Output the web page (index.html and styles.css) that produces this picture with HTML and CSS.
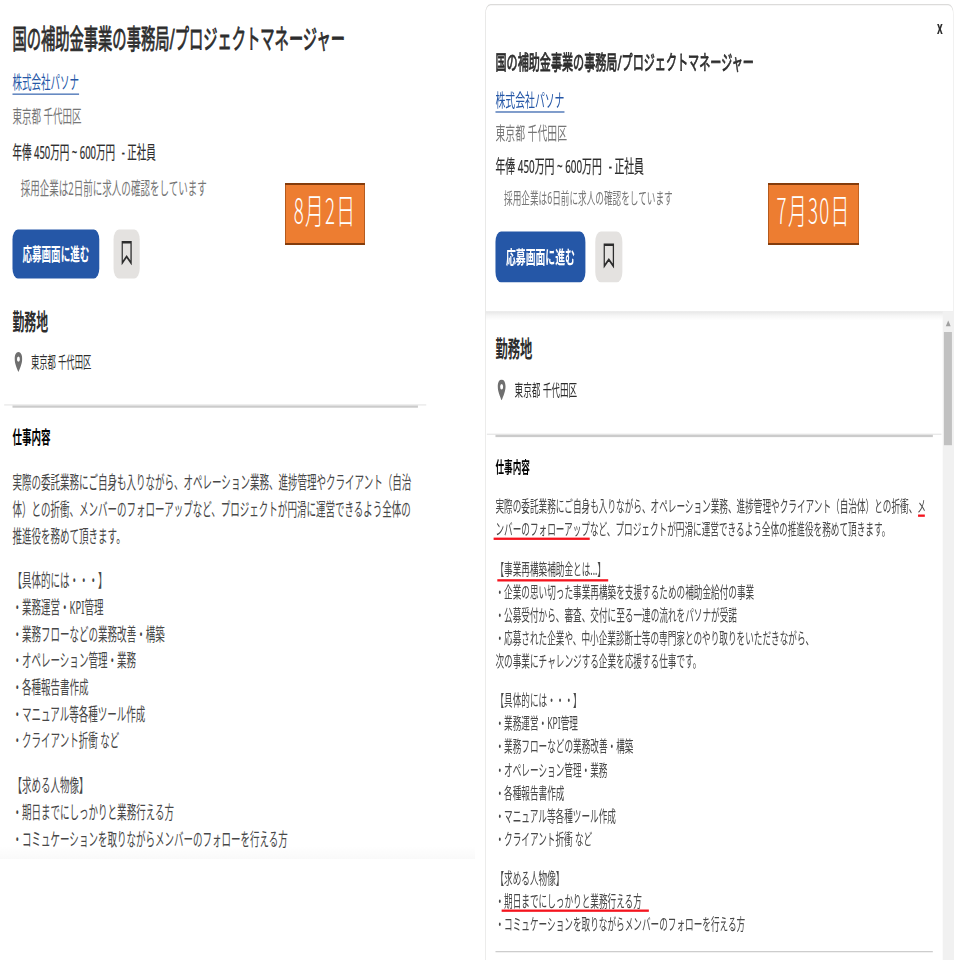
FILE: index.html
```
<!DOCTYPE html>
<html lang="ja">
<head>
    <meta charset="UTF-8">
    <meta name="viewport" content="width=device-width, initial-scale=1.0">
    <title>国の補助金事業の事務局/プロジェクトマネージャー</title>
    <link rel="stylesheet" href="styles.css">
</head>
<body>
    <!-- Posting on August 2 -->
    <section class="pane pane-left">
        <div class="sheet">
            <h1>国の補助金事業の事務局/プロジェクトマネージャー</h1>
            <div class="company"><a href="#">株式会社パソナ</a></div>
            <div class="location">東京都 千代田区</div>
            <div class="salary">年俸 450万円 ~ 600万円 <span class="job-type">- 正社員</span></div>
            <div class="note">採用企業は2日前に求人の確認をしています</div>
            <div class="actions">
                <button class="apply">応募画面に進む</button>
                <button class="save" aria-label="保存">
                    <svg width="18" height="22" viewBox="0 0 18 22"><path d="M1.5 1.5H16.5V20L9 14.2L1.5 20Z"/></svg>
                </button>
            </div>
            <h2>勤務地</h2>
            <div class="place">
                <svg width="14" height="18" viewBox="0 0 14 18"><path fill-rule="evenodd" d="M7 0C3.1 0 .6 2.8.6 6.3C.6 10.8 7 18 7 18S13.4 10.8 13.4 6.3C13.4 2.8 10.9 0 7 0ZM7 4A2.4 2.4 0 1 1 7 8.8A2.4 2.4 0 1 1 7 4Z"/></svg>
                <span>東京都 千代田区</span>
            </div>
            <div class="divider"></div>
            <h3>仕事内容</h3>
            <div class="description">
                <p>実際の委託業務にご自身も入りながら、オペレーション業務、進捗管理やクライアント（自治<br>体）との折衝、メンバーのフォローアップなど、プロジェクトが円滑に運営できるよう全体の<br>推進役を務めて頂きます。</p>
                <p>【具体的には・・・】<br>・業務運営・KPI管理<br>・業務フローなどの業務改善・構築<br>・オペレーション管理・業務<br>・各種報告書作成<br>・マニュアル等各種ツール作成<br>・クライアント折衝 など</p>
                <p>【求める人物像】<br>・期日までにしっかりと業務行える方<br>・コミュケーションを取りながらメンバーのフォローを行える方</p>
            </div>
        </div>
        <div class="fade"></div>
        <div class="date-label">8月2日</div>
    </section>

    <!-- Posting on July 30 -->
    <section class="pane pane-right">
        <div class="sheet">
            <div class="sheet-head">
                <span class="close">x</span>
                <h1>国の補助金事業の事務局/プロジェクトマネージャー</h1>
                <div class="company"><a href="#">株式会社パソナ</a></div>
                <div class="location">東京都 千代田区</div>
                <div class="salary">年俸 450万円 ~ 600万円 <span class="job-type">- 正社員</span></div>
                <div class="note">採用企業は6日前に求人の確認をしています</div>
                <div class="actions">
                    <button class="apply">応募画面に進む</button>
                    <button class="save" aria-label="保存">
                        <svg width="18" height="22" viewBox="0 0 18 22"><path d="M1.5 1.5H16.5V20L9 14.2L1.5 20Z"/></svg>
                    </button>
                </div>
            </div>
            <div class="sheet-body">
                <div class="content">
                    <h2>勤務地</h2>
                    <div class="place">
                        <svg width="14" height="18" viewBox="0 0 14 18"><path fill-rule="evenodd" d="M7 0C3.1 0 .6 2.8.6 6.3C.6 10.8 7 18 7 18S13.4 10.8 13.4 6.3C13.4 2.8 10.9 0 7 0ZM7 4A2.4 2.4 0 1 1 7 8.8A2.4 2.4 0 1 1 7 4Z"/></svg>
                        <span>東京都 千代田区</span>
                    </div>
                    <div class="divider"></div>
                    <h3>仕事内容</h3>
                    <div class="description">
                        <p>実際の委託業務にご自身も入りながら、オペレーション業務、進捗管理やクライアント（自治体）との折衝、<span class="mark mark-me">メ</span><br><span class="mark mark-follow">ンバーのフォローアップ</span>など、プロジェクトが円滑に運営できるよう全体の推進役を務めて頂きます。</p>
                        <p><span class="mark mark-subsidy">【事業再構築補助金とは...】</span><br>・企業の思い切った事業再構築を支援するための補助金給付の事業<br>・公募受付から、審査、交付に至る一連の流れをパソナが受諾<br>・応募された企業や、中小企業診断士等の専門家とのやり取りをいただきながら、<br>次の事業にチャレンジする企業を応援する仕事です。</p>
                        <p>【具体的には・・・】<br>・業務運営・KPI管理<br>・業務フローなどの業務改善・構築<br>・オペレーション管理・業務<br>・各種報告書作成<br>・マニュアル等各種ツール作成<br>・クライアント折衝 など</p>
                        <p>【求める人物像】<br>・<span class="mark mark-deadline">期日までにしっかりと業務行える方</span><br>・コミュケーションを取りながらメンバーのフォローを行える方</p>
                    </div>
                    <div class="bottom-line"></div>
                </div>
                <div class="scrollbar">
                    <div class="arrow"></div>
                    <div class="thumb"></div>
                </div>
            </div>
        </div>
        <div class="date-label">7月30日</div>
    </section>
</body>
</html>
```
FILE: styles.css
```
* {
    box-sizing: border-box;
}

body {
    margin: 0;
    width: 960px;
    height: 960px;
    display: flex;
    overflow: hidden;
    background: #fff;
    color: #2d2d2d;
    font-family: "Noto Sans", "Noto Sans CJK JP", sans-serif;
}

h1, h2, h3, p {
    margin: 0;
}

.pane {
    position: relative;
    width: 480px;
    height: 960px;
    overflow: hidden;
}

/* The sheets are laid out at full size and squeezed into their pane */
.sheet {
    transform-origin: 0 0;
    white-space: nowrap;
    font-size: 16px;
    line-height: 24px;
}

.pane-left .sheet {
    width: 800px;
    height: 771px;
    padding: 19px 0 0 21px;
    transform: scale(0.5945, 1.114);
}

/* Regular weight thickened a little, bold is too heavy here */
h1 {
    font-size: 24px;
    line-height: 32px;
    font-weight: normal;
    -webkit-text-stroke: 0.8px #2d2d2d;
}

.company {
    margin-top: 11px;
}

.company a {
    display: inline-block;
    height: 23px;
    color: #2557a7;
    text-decoration: none;
    border-bottom: 1px solid #2557a7;
}

.location {
    margin-top: 6px;
    color: #767676;
}

.salary {
    margin-top: 9px;
    -webkit-text-stroke: 0.2px #2d2d2d;
}

.job-type {
    margin-left: 7px;
}

.note {
    margin-top: 8px;
    padding-left: 14px;
    color: #767676;
}

/* Buttons */
.actions {
    display: flex;
    gap: 24px;
    margin-top: 24.5px;
}

.actions button {
    height: 44px;
    padding: 0 0 2px;
    border: none;
    border-radius: 9px;
    font-family: inherit;
    font-size: 16px;
}

.apply {
    width: 146px;
    background: #2557a7;
    color: #fff;
    font-weight: bold;
}

.save {
    display: flex;
    align-items: center;
    justify-content: center;
    width: 44px;
    background: #e4e2e0;
}

.save svg {
    fill: none;
    stroke: #2d2d2d;
    stroke-width: 2.2;
}

h2 {
    margin-top: 25.5px;
    font-size: 20px;
    line-height: 28px;
}

.place {
    display: flex;
    align-items: center;
    gap: 14px;
    margin-top: 12px;
    padding-left: 3px;
    font-size: 14px;
    line-height: 20px;
}

.place svg {
    fill: #6f6f6f;
}

/* Light line with a shorter, darker one under it */
.divider {
    width: 710px;
    height: 2.6px;
    margin: 28px 0 0 -14px;
    border-top: 1px solid #e4e4e4;
}

.divider::after {
    content: "";
    display: block;
    height: 1.6px;
    margin: 0 14px;
    background: #cbcbcb;
}

h3 {
    margin-top: 15px;
    font-size: 16px;
    line-height: 24px;
    color: #000;
}

.description {
    margin-top: 16px;
    color: #474747;
}

.description p + p {
    margin-top: 16px;
}

.fade {
    position: absolute;
    left: 0;
    top: 846px;
    width: 475px;
    height: 13px;
    background: linear-gradient(rgba(0, 0, 0, 0), rgba(0, 0, 0, 0.022));
}

/* Right posting with a fixed head and a scrolling body */
.pane-right .sheet {
    width: 761px;
    height: 840px;
    margin: 4px 0 0 5px;
    border: 1.5px solid #dcdbda;
    border-bottom: none;
    border-radius: 9px 9px 0 0;
    overflow: hidden;
    transform: scale(0.616, 1.155);
}

.sheet-head {
    position: relative;
    height: 264.5px;
    padding: 36.7px 0 0 16px;
}

.close {
    position: absolute;
    top: 7px;
    right: 17px;
    font-size: 16px;
    font-weight: bold;
}

.pane-right h1 {
    font-size: 18px;
    line-height: 24px;
    -webkit-text-stroke-width: 0.7px;
}

.pane-right .company {
    margin-top: 9px;
}

.pane-right .location {
    margin-top: 5px;
}

.pane-right .salary {
    margin-top: 4.5px;
}

.pane-right .note {
    margin-top: 6px;
    font-size: 14px;
    line-height: 20px;
}

.pane-right .actions {
    gap: 16px;
    margin-top: 18.5px;
}

.sheet-body {
    display: flex;
    height: 575px;
    background: linear-gradient(#e6e6e6, #f6f6f6 4px, #fff 8px);
}

.content {
    flex: 1;
    padding-left: 16px;
}

.pane-right h2 {
    margin-top: 19px;
}

.pane-right .place {
    margin-top: 11.5px;
}

.pane-right .divider {
    width: 738px;
    margin: 28px 0 0 -14px;
}

.pane-right h3 {
    margin-top: 16.5px;
    font-size: 14px;
    line-height: 20px;
}

.pane-right .description {
    margin-top: 13.6px;
    font-size: 14px;
    line-height: 20px;
}

.pane-right .description p + p {
    margin-top: 14px;
}

.bottom-line {
    width: 710px;
    height: 1px;
    margin-top: 13px;
    background: #c8c8c8;
}

.scrollbar {
    width: 17px;
    padding: 0 2px;
    background: #f1f1f1;
}

.arrow {
    width: 0;
    margin: 8px auto 5px;
    border: 4px solid transparent;
    border-top: none;
    border-bottom: 5px solid #a0a0a0;
}

.thumb {
    height: 98px;
    background: #c1c1c1;
}

/* Red pen lines */
.mark {
    position: relative;
}

.mark::after {
    content: "";
    position: absolute;
    left: -3px;
    right: 0;
    bottom: -0.5px;
    height: 2px;
    background: #f5141e;
}

.mark-me::after {
    left: 1px;
    right: 2px;
}

.mark-subsidy::after {
    left: 3px;
    right: -4px;
    bottom: -2px;
}

.mark-deadline::after {
    left: -4px;
    right: -11px;
}

/* Date stamps over each posting */
.date-label {
    position: absolute;
    top: 183px;
    left: 285px;
    width: 150px;
    height: 62px;
    border: solid #843c0c;
    border-width: 2px 1.9px;
    background: #ed7d31;
    color: #fff;
    font-family: "Noto Sans CJK JP", sans-serif;
    font-size: 35px;
    font-weight: 300;
    line-height: 48px;
    letter-spacing: 2.5px;
    text-align: center;
    transform: scaleX(0.533);
    transform-origin: 0 0;
}

.pane-right .date-label {
    left: 288px;
    width: 171px;
}
```
